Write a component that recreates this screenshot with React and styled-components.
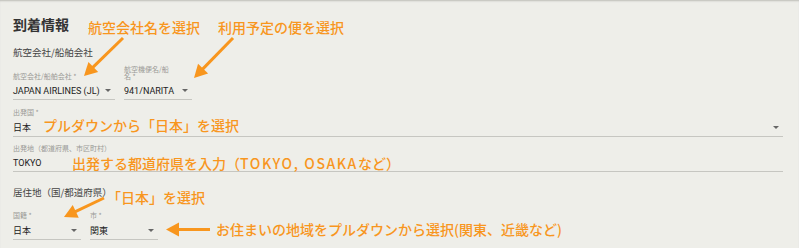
import React from 'react'
import styled, { createGlobalStyle } from 'styled-components';

const GlobalStyle = createGlobalStyle`
  html, body {
    margin: 0;
    padding: 0;
    background: #eeeee9;
  }
`;

const JP = `"Noto Sans CJK JP", "Noto Sans", sans-serif`;
const ORANGE = '#f8961e';

const Page = styled.div`
  position: relative;
  width: 799px;
  height: 248px;
  overflow: hidden;
  background: #eeeee9;
  font-family: ${JP};
  box-shadow: inset 0 2px 2px -1px #bdbdb8;
`;

const Form = styled.div`
  padding: 13.5px 16px 0 13px;
`;

const Title = styled.h2`
  margin: 0;
  font-size: 14px;
  line-height: 20px;
  font-weight: 700;
  color: #333;
`;

const SectionLabel = styled.div`
  margin-top: ${p => p.$mt}px;
  font-size: 9.5px;
  line-height: 14px;
  color: #444;
`;

const Row = styled.div`
  display: flex;
  align-items: flex-end;
  gap: 9px;
  margin-top: ${p => p.$mt}px;
`;

const Field = styled.div`
  width: ${p => (p.$w ? `${p.$w}px` : 'auto')};
  margin-top: ${p => p.$mt || 0}px;
`;

const Label = styled.div`
  font-size: 7px;
  line-height: 7px;
  color: #9a9a96;
  max-width: ${p => (p.$maxW ? `${p.$maxW}px` : 'none')};
`;

const Control = styled.div`
  display: flex;
  align-items: center;
  justify-content: space-between;
  gap: 4px;
  margin-top: 3px;
  height: 16.5px;
  padding-right: 4px;
  border-bottom: 1.5px solid #c6c6c1;
  font-family: Roboto, ${JP};
  font-size: 9px;
  color: #222;
  white-space: nowrap;
`;

const Caret = styled.span`
  flex: none;
  width: 0;
  height: 0;
  border-left: 3px solid transparent;
  border-right: 3px solid transparent;
  border-top: 3px solid #666;
`;

const Note = styled.span`
  position: absolute;
  left: ${p => p.$x}px;
  top: ${p => p.$y}px;
  font-size: 14px;
  line-height: 16px;
  font-weight: 500;
  color: ${ORANGE};
  white-space: nowrap;
`;

const Latin = styled.span`
  letter-spacing: 1.6px;
`;

const Overlay = styled.svg`
  position: absolute;
  inset: 0;
  pointer-events: none;
`;

const Arrow = ({ from, to }) => {
  const [x1, y1] = from;
  const [x2, y2] = to;
  const dx = x2 - x1;
  const dy = y2 - y1;
  const len = Math.hypot(dx, dy);
  const ux = dx / len;
  const uy = dy / len;
  const bx = x2 - ux * 13;
  const by = y2 - uy * 13;
  const px = -uy * 7;
  const py = ux * 7;
  return (
    <g>
      <line x1={x1} y1={y1} x2={bx + ux} y2={by + uy} stroke={ORANGE} strokeWidth="3" />
      <polygon points={`${x2},${y2} ${bx + px},${by + py} ${bx - px},${by - py}`} fill={ORANGE} />
    </g>
  );
};

const Select = ({ label, value, w, mt, maxW }) => (
  <Field $w={w} $mt={mt}>
    <Label $maxW={maxW}>{label}</Label>
    <Control>
      <span>{value}</span>
      <Caret />
    </Control>
  </Field>
);

const App = () => {
  return (
    <Page>
      <GlobalStyle />
      <Form>
        <Title>到着情報</Title>
        <SectionLabel $mt={11}>航空会社/船舶会社</SectionLabel>
        <Row $mt={7}>
          <Select label="航空会社/船舶会社 *" value="JAPAN AIRLINES (JL)" w={102} />
          <Select label="航空機便名/船名 *" value="941/NARITA" w={68} maxW={46} />
        </Row>
        <Select label="出発国 *" value="日本" mt={9} />
        <Field $mt={8}>
          <Label>出発地（都道府県、市区町村）</Label>
          <Control>
            <span>TOKYO</span>
          </Control>
        </Field>
        <SectionLabel $mt={13}>居住地（国/都道府県）</SectionLabel>
        <Row $mt={13}>
          <Select label="国籍 *" value="日本" w={68} />
          <Select label="市 *" value="関東" w={68} />
        </Row>
      </Form>

      <Overlay width="799" height="248">
        <Arrow from={[123, 38]} to={[84, 76]} />
        <Arrow from={[233, 38]} to={[194, 78]} />
        <Arrow from={[104, 198]} to={[64, 217]} />
        <Arrow from={[210, 229.5]} to={[166, 229.5]} />
      </Overlay>

      <Note $x={88} $y={18.5}>航空会社名を選択</Note>
      <Note $x={218} $y={18.5}>利用予定の便を選択</Note>
      <Note $x={43} $y={116.5}>プルダウンから「日本」を選択</Note>
      <Note $x={72} $y={154.5}>出発する都道府県を入力（<Latin>TOKYO, OSAKA</Latin>など）</Note>
      <Note $x={107} $y={189}>「日本」を選択</Note>
      <Note $x={216} $y={221}>お住まいの地域をプルダウンから選択(関東、近畿など)</Note>
    </Page>
  )
}

export default App
